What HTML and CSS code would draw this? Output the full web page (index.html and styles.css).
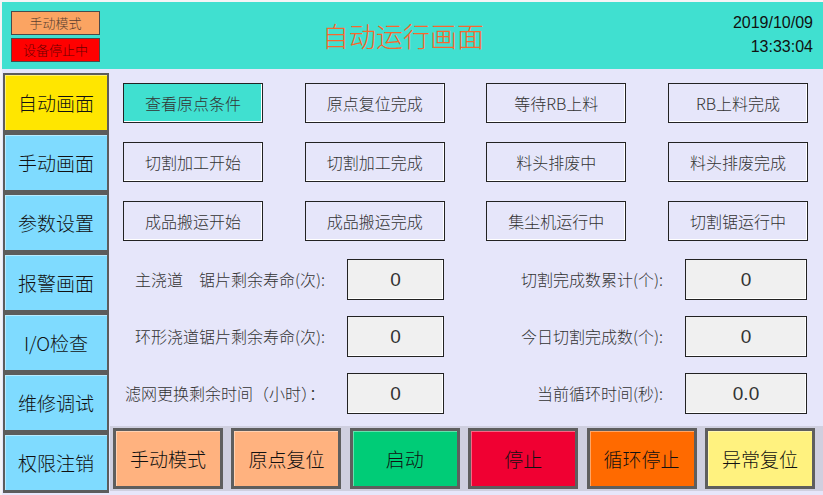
FILE: index.html
```html
<html>

<head>
    <title>自动运行画面</title>
    <meta charset="utf-8">
    <link rel="stylesheet" href="styles.css">
</head>

<body>
    <div class="screen">
        <div class="header">
            <div class="status">
                <div class="status-box mode">手动模式</div>
                <div class="status-box alarm">设备停止中</div>
            </div>
            <div class="title">自动运行画面</div>
            <div class="clock">
                <div>2019/10/09</div>
                <div>13:33:04</div>
            </div>
        </div>

        <div class="main">
            <div class="nav">
                <button class="navbtn active">自动画面</button>
                <button class="navbtn">手动画面</button>
                <button class="navbtn">参数设置</button>
                <button class="navbtn">报警画面</button>
                <button class="navbtn">I/O检查</button>
                <button class="navbtn">维修调试</button>
                <button class="navbtn">权限注销</button>
            </div>

            <div class="content">
                <div class="signals">
                    <div class="signal lit">查看原点条件</div>
                    <div class="signal">原点复位完成</div>
                    <div class="signal">等待RB上料</div>
                    <div class="signal">RB上料完成</div>
                    <div class="signal">切割加工开始</div>
                    <div class="signal">切割加工完成</div>
                    <div class="signal">料头排废中</div>
                    <div class="signal">料头排废完成</div>
                    <div class="signal">成品搬运开始</div>
                    <div class="signal">成品搬运完成</div>
                    <div class="signal">集尘机运行中</div>
                    <div class="signal">切割锯运行中</div>
                </div>

                <div class="data">
                    <div class="label">主浇道　锯片剩余寿命(次):</div>
                    <div class="value">0</div>
                    <div class="label">切割完成数累计(个):</div>
                    <div class="value">0</div>

                    <div class="label">环形浇道锯片剩余寿命(次):</div>
                    <div class="value">0</div>
                    <div class="label">今日切割完成数(个):</div>
                    <div class="value">0</div>

                    <div class="label">滤网更换剩余时间（小时）：</div>
                    <div class="value">0</div>
                    <div class="label">当前循环时间(秒):</div>
                    <div class="value">0.0</div>
                </div>

                <div class="actions">
                    <button class="action manual">手动模式</button>
                    <button class="action home">原点复位</button>
                    <button class="action start">启动</button>
                    <button class="action stop">停止</button>
                    <button class="action cycle">循环停止</button>
                    <button class="action reset">异常复位</button>
                </div>
            </div>
        </div>
    </div>
</body>

</html>
```

FILE: styles.css
```css
body {
    margin: 0;
    background-color: #f4f4f6;
    font-family: "Noto Sans CJK SC", "Liberation Sans", sans-serif;
    font-weight: 300;
    color: #222;
}

.screen {
    width: 821px;
    height: 493px;
    margin: 2px 0 0 2px;
    display: flex;
    flex-direction: column;
    background-color: #e6e6fa;
}

/* header */

.header {
    height: 67px;
    flex-shrink: 0;
    display: flex;
    align-items: flex-start;
    background-color: #40e0d0;
}

.status {
    width: 320px;
    padding: 9px 0 0 9px;
    box-sizing: border-box;
    display: flex;
    flex-direction: column;
    gap: 3px;
}

.status-box {
    width: 89px;
    height: 24px;
    box-sizing: border-box;
    border: 1px solid #4a4a4a;
    font-size: 13px;
    line-height: 22px;
    text-align: center;
}

.status-box.mode {
    background-color: #fba462;
    color: #5a4030;
}

.status-box.alarm {
    background-color: #ff0000;
    color: #6a0000;
}

.title {
    align-self: center;
    font-size: 27px;
    line-height: 34px;
    color: #f8672c;
}

.clock {
    margin-left: auto;
    padding: 9px 10px 0 0;
    font-family: "Liberation Sans", sans-serif;
    font-weight: 400;
    font-size: 16px;
    line-height: 24px;
    text-align: right;
    color: #111;
}

/* left navigation */

.main {
    flex: 1;
    display: flex;
}

.nav {
    width: 108px;
    flex-shrink: 0;
    padding: 4px 0 0 1px;
    box-sizing: border-box;
    display: flex;
    flex-direction: column;
}

.navbtn {
    width: 106px;
    height: 60px;
    box-sizing: border-box;
    border: 2px solid #5c5c5c;
    border-bottom-width: 3px;
    box-shadow: inset 1px 1px 0 rgba(255, 255, 255, 0.45);
    background-color: #7fdbff;
    font-family: "Noto Sans CJK SC", sans-serif;
    font-weight: 300;
    font-size: 19px;
    color: #111;
    padding: 0;
}

.navbtn.active {
    background-color: #ffe600;
}

/* content */

.content {
    flex: 1;
    display: flex;
    flex-direction: column;
}

.signals {
    margin: 14px 0 0 13px;
    display: grid;
    grid-template-columns: repeat(4, 140px);
    grid-auto-rows: 40px;
    column-gap: 41.7px;
    row-gap: 19px;
}

.signal {
    box-sizing: border-box;
    border: 1px solid #222;
    box-shadow: inset -1px -1px 0 #ffffff;
    font-size: 16px;
    line-height: 38px;
    text-align: center;
    color: #333;
}

.signal.lit {
    background-color: #40e0d0;
}

.data {
    margin: 18px 0 0 13px;
    display: grid;
    grid-template-columns: 202px 97px 197px 122px;
    grid-auto-rows: 41px;
    column-gap: 22px;
    row-gap: 16px;
}

.label {
    font-size: 16px;
    line-height: 41px;
    text-align: right;
    white-space: pre;
    color: #333;
}

.value {
    box-sizing: border-box;
    border: 1px solid #222;
    box-shadow: inset -1px -1px 0 #ffffff;
    background-color: #f0f0f0;
    font-family: "Liberation Sans", sans-serif;
    font-weight: 400;
    font-size: 19px;
    line-height: 39px;
    text-align: center;
    color: #333;
}

.actions {
    margin-top: 12px;
    padding: 2px 3px;
    display: flex;
    gap: 8.4px;
    background-color: #cfcfdf;
}

.action {
    width: 110px;
    height: 61px;
    box-sizing: border-box;
    border: 3px solid #5e5e5e;
    box-shadow: inset 1px 1px 0 rgba(255, 255, 255, 0.4);
    font-family: "Noto Sans CJK SC", sans-serif;
    font-weight: 300;
    font-size: 19px;
    color: #111;
    padding: 0;
}

.action.manual,
.action.home {
    background-color: #ffb27f;
}

.action.start {
    background-color: #00cc77;
}

.action.stop {
    background-color: #f00032;
}

.action.cycle {
    background-color: #ff6a00;
}

.action.reset {
    background-color: #fff27f;
}
```
